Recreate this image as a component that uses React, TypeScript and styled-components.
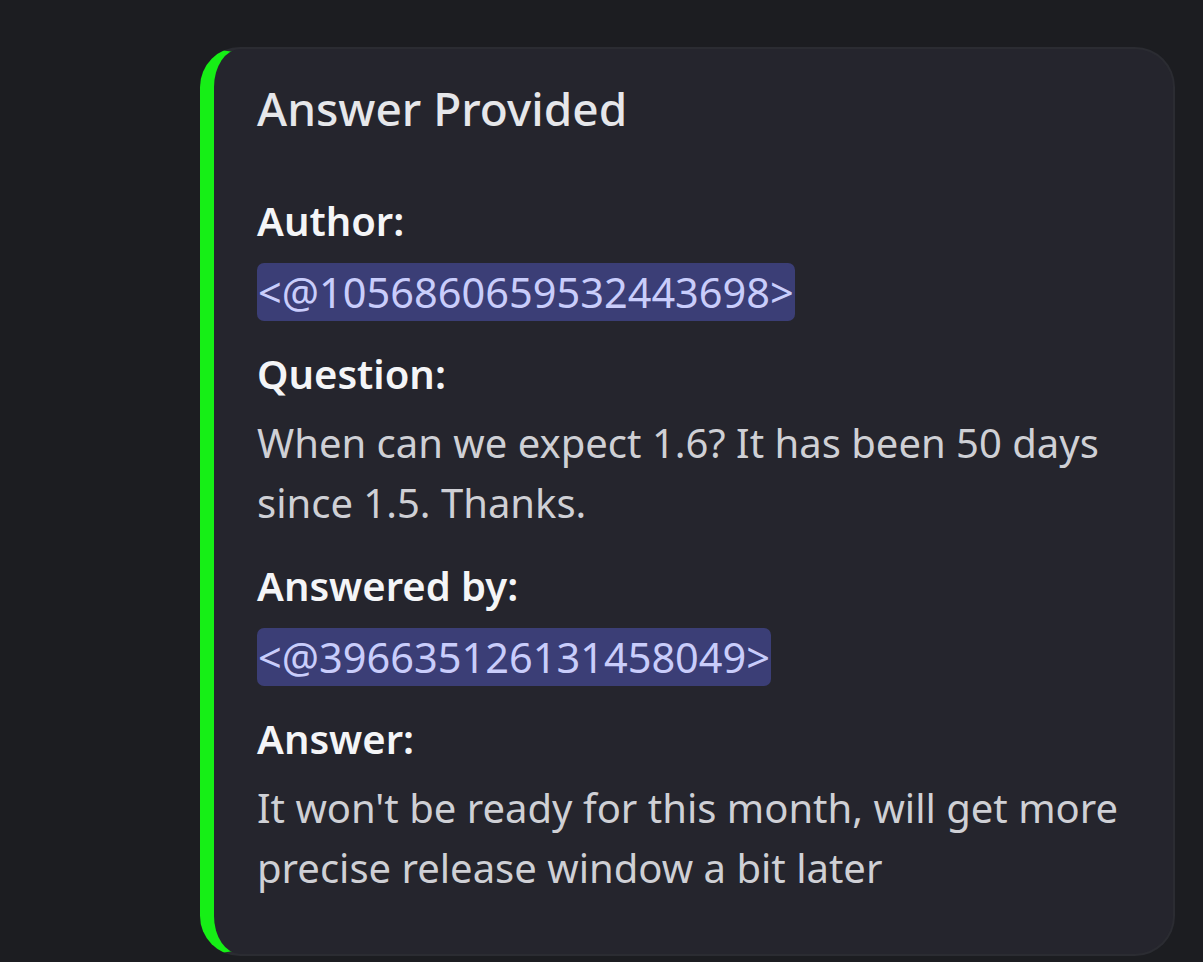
import React from "react";
import styled, { createGlobalStyle } from "styled-components";

const GlobalStyle = createGlobalStyle`
  html, body {
    margin: 0;
    padding: 0;
    background: #1c1d21;
  }
  body {
    font-family: "Noto Sans", "Open Sans", sans-serif;
  }
`;

const Page = styled.div`
  min-height: 962px;
  padding: 47px 0 0 200px;
  box-sizing: border-box;
  background: #1c1d21;
`;

const Card = styled.article`
  width: 975px;
  box-sizing: border-box;
  background: #25252d;
  border: 2px solid #2b2c32;
  border-left: 14px solid #16ef16;
  border-radius: 40px;
  padding: 29px 40px 56px 43px;
  display: flex;
  flex-direction: column;
  align-items: flex-start;
`;

const Title = styled.h2`
  margin: 0 0 58px;
  font-size: 46px;
  line-height: 60px;
  font-weight: 500;
  color: #e6e7ea;
`;

const Label = styled.div<{ $tight?: boolean }>`
  font-size: 40px;
  line-height: 50px;
  font-weight: 600;
  color: #f4f5f7;
  margin-bottom: ${(p) => (p.$tight ? "17px" : "14px")};
`;

const Mention = styled.span`
  display: inline-block;
  background: #3b3e76;
  color: #c9cdfb;
  border-radius: 7px;
  font-size: 41.5px;
  line-height: 58px;
  padding: 0 1px;
  margin-bottom: 28px;
`;

const Body = styled.p`
  margin: 0 0 28px;
  font-size: 40px;
  line-height: 60px;
  color: #cfd0d5;
  max-width: 880px;
`;

const LastBody = styled(Body)`
  margin-bottom: 0;
`;

export default function App() {
  return (
    <>
      <GlobalStyle />
      <Page>
        <Card>
          <Title>Answer Provided</Title>
          <Label $tight>Author:</Label>
          <Mention>&lt;@1056860659532443698&gt;</Mention>
          <Label>Question:</Label>
          <Body>When can we expect 1.6? It has been 50 days since 1.5. Thanks.</Body>
          <Label $tight>Answered by:</Label>
          <Mention>&lt;@396635126131458049&gt;</Mention>
          <Label>Answer:</Label>
          <LastBody>
            It won't be ready for this month, will get more precise release window a bit later
          </LastBody>
        </Card>
      </Page>
    </>
  );
}
